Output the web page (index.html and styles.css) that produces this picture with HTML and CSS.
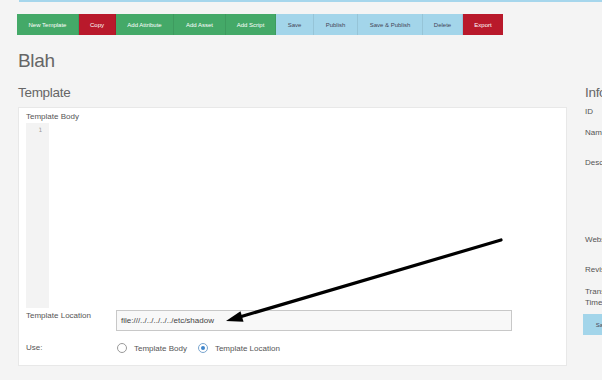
FILE: index.html
```html
<!DOCTYPE html>
<html>
<head>
<meta charset="utf-8">
<link rel="stylesheet" href="styles.css">
</head>
<body>
<div class="topline"></div>
<div class="toolbar">
  <span class="btn green">New Template</span>
  <span class="btn red">Copy</span>
  <span class="btn green">Add Attribute</span>
  <span class="btn green">Add Asset</span>
  <span class="btn green">Add Script</span>
  <span class="btn blue">Save</span>
  <span class="btn blue">Publish</span>
  <span class="btn blue">Save &amp; Publish</span>
  <span class="btn blue">Delete</span>
  <span class="btn red">Export</span>
</div>
<h1 class="title">Blah</h1>
<div class="page">
  <div class="main">
    <h2 class="section">Template</h2>
    <div class="panel">
      <div class="label">Template Body</div>
      <div class="editor">
        <div class="gutter"><span class="lineno">1</span></div>
        <div class="code"></div>
      </div>
      <div class="row loc-row">
        <div class="row-label">Template Location</div>
        <div class="input">file:///../../../../../etc/shadow</div>
      </div>
      <div class="row use-row">
        <div class="row-label">Use:</div>
        <div class="radios">
          <span class="radio"></span><span class="radio-text">Template Body</span>
          <span class="radio checked"></span><span class="radio-text">Template Location</span>
        </div>
      </div>
    </div>
  </div>
  <div class="side">
    <h2 class="section">Info</h2>
    <div class="info-label id">ID</div>
    <div class="info-label name">Name</div>
    <div class="info-label desc">Description</div>
    <div class="info-label web">Website</div>
    <div class="info-label rev">Revision</div>
    <div class="info-label trans">Transaction<br>Time</div>
    <span class="btn blue side-btn">Save</span>
  </div>
</div>
<svg class="arrow" width="602" height="380" viewBox="0 0 602 380">
  <line x1="501" y1="240" x2="238" y2="317.5" stroke="#000" stroke-width="3.2" stroke-linecap="round"/>
  <polygon points="226,321 243.5,321.8 240.5,311.2" fill="#000"/>
</svg>
</body>
</html>
```
FILE: styles.css
```css
html, body {
  margin: 0;
  padding: 0;
}
body {
  width: 602px;
  height: 380px;
  overflow: hidden;
  background: #f4f4f4;
  font-family: "Liberation Sans", Arial, sans-serif;
  color: #555;
  position: relative;
}
.topline {
  margin-left: 19px;
  height: 2px;
  background: #a6d6ec;
}
.toolbar {
  display: flex;
  margin: 12px 0 0 17px;
  height: 21px;
}
.btn {
  display: flex;
  align-items: center;
  justify-content: center;
  height: 21px;
  box-sizing: border-box;
  padding: 0 11px;
  font-size: 6px;
  white-space: nowrap;
  border-right: 1px solid rgba(0,0,0,0.08);
}
.green { background: #44a968; color: #fff; }
.red { background: #b9192b; color: #fff; }
.blue { background: #a3d5ea; color: #445; }
.toolbar .btn:nth-child(1) { width: 62px; }
.toolbar .btn:nth-child(2) { width: 37px; }
.toolbar .btn:nth-child(3) { width: 58px; }
.toolbar .btn:nth-child(4) { width: 52px; }
.toolbar .btn:nth-child(5) { width: 50px; }
.toolbar .btn:nth-child(6) { width: 38px; }
.toolbar .btn:nth-child(7) { width: 44px; }
.toolbar .btn:nth-child(8) { width: 65px; }
.toolbar .btn:nth-child(9) { width: 40px; }
.toolbar .btn:nth-child(10) { width: 40px; border-right: 0; }

.title {
  margin: 15px 0 0 18px;
  font-size: 19px;
  line-height: 22px;
  font-weight: normal;
  color: #666;
  letter-spacing: -0.3px;
}
.page {
  display: grid;
  grid-template-columns: 549px 200px;
  column-gap: 18px;
  margin-left: 18px;
}
.section {
  margin: 13px 0 0 0;
  font-size: 13.5px;
  line-height: 16px;
  font-weight: normal;
  color: #666;
  letter-spacing: -0.3px;
}
.panel {
  margin-top: 6px;
  background: #fff;
  border: 1px solid #e8e8e8;
  box-sizing: border-box;
  height: 259px;
  padding: 4px 8px 0 7px;
}
.label, .row-label, .info-label {
  font-size: 8px;
  line-height: 10px;
  color: #555;
}
.editor {
  display: flex;
  margin-top: 1px;
  height: 185px;
}
.gutter {
  width: 23px;
  background: #f3f3f3;
  display: flex;
  justify-content: flex-end;
  padding-right: 7px;
  box-sizing: border-box;
}
.lineno {
  font-family: "DejaVu Sans Mono", monospace;
  font-size: 6px;
  line-height: 10px;
  margin-top: 2px;
  color: #999;
}
.code { flex: 1; }
.row {
  display: flex;
}
.row-label {
  width: 90px;
}
.loc-row {
  margin-top: 2px;
}
.loc-row .row-label {
  margin-top: 1px;
}
.input {
  width: 396px;
  height: 21px;
  box-sizing: border-box;
  border: 1px solid #c8c8c8;
  background: #f8f8f8;
  font-size: 8px;
  line-height: 19px;
  padding-left: 4px;
  color: #444;
}
.use-row {
  margin-top: 11px;
  align-items: center;
}
.radios {
  display: flex;
  align-items: center;
  margin-left: 1px;
}
.radio {
  width: 10px;
  height: 10px;
  box-sizing: border-box;
  border: 1px solid #9a9a9a;
  border-radius: 50%;
  background: #fff;
  position: relative;
}
.radio.checked {
  border-color: #7aa6cf;
}
.radio.checked::after {
  content: "";
  position: absolute;
  left: 2px;
  top: 2px;
  width: 4px;
  height: 4px;
  border-radius: 50%;
  background: #3f86cc;
}
.radio-text {
  font-size: 8px;
  margin: 2px 0 0 7px;
  color: #555;
}
.radio-text:nth-of-type(2) {
  margin-right: 11px;
}
.side {
  display: flex;
  flex-direction: column;
  align-items: flex-start;
}
.info-label { white-space: nowrap; }
.id { margin-top: 6px; }
.name { margin-top: 11px; }
.desc { margin-top: 20px; }
.web { margin-top: 67px; }
.rev { margin-top: 20px; }
.trans { margin-top: 11px; line-height: 11px; }
.side-btn {
  margin: 6px 0 0 -2px;
  width: 40px;
}
.arrow {
  position: absolute;
  left: 0;
  top: 0;
  pointer-events: none;
}
```
